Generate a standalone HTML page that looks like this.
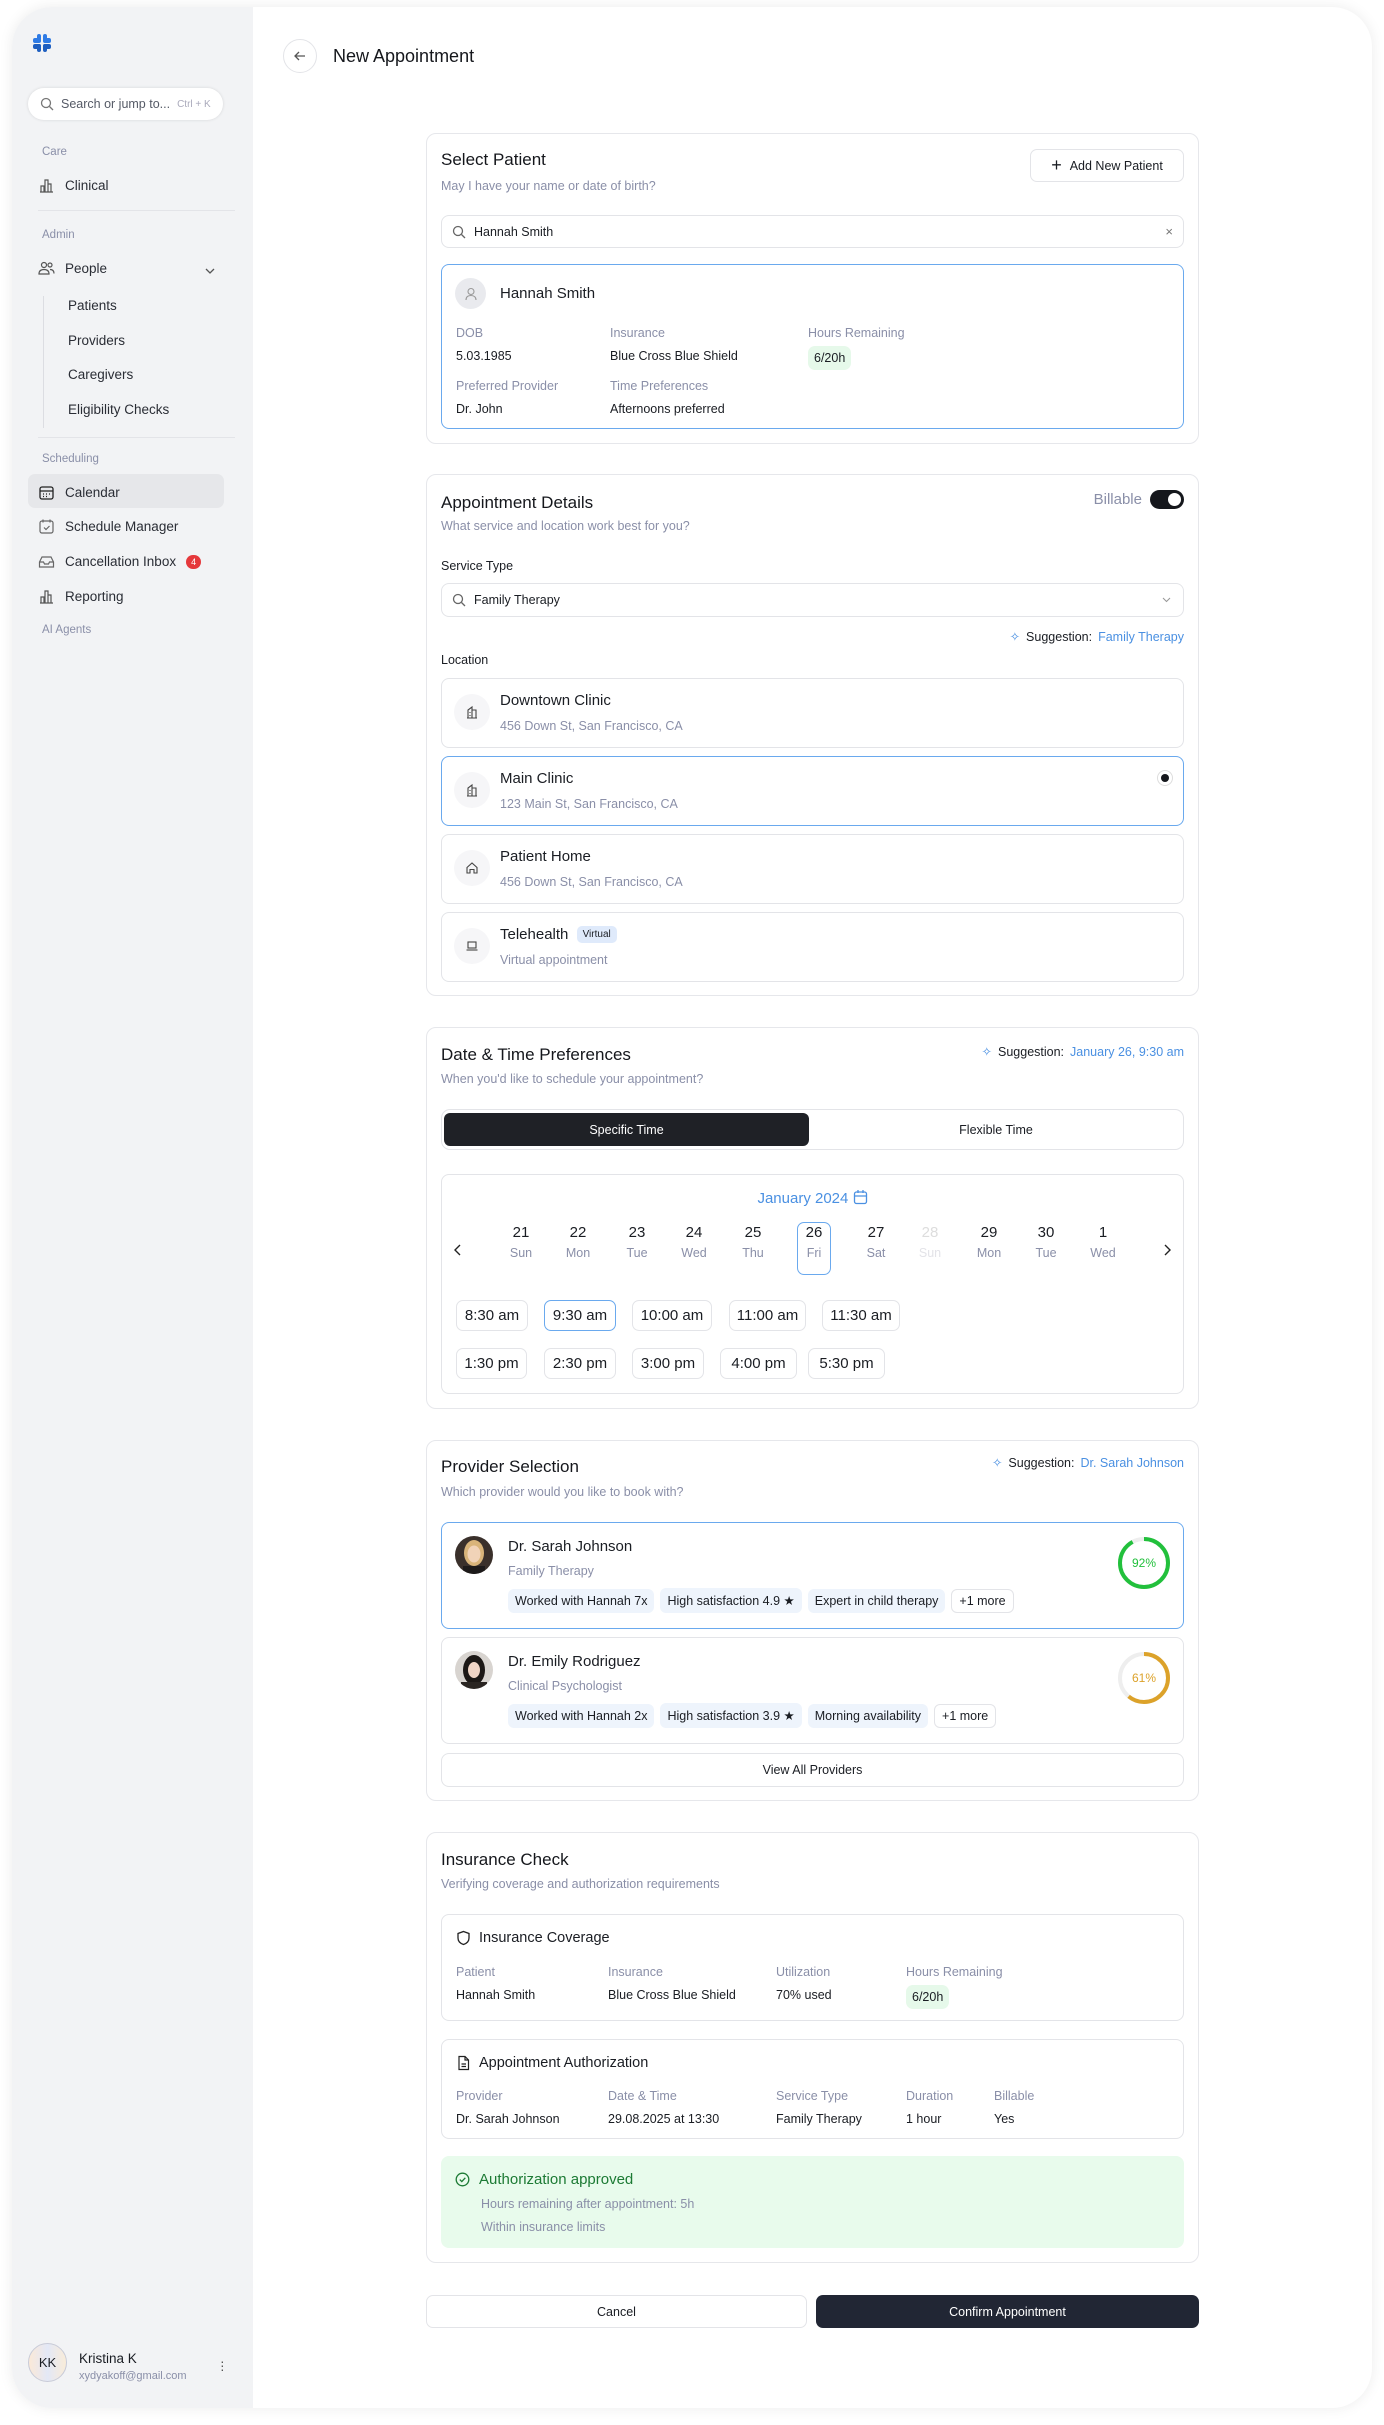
<!DOCTYPE html>
<html><head><meta charset="utf-8"><style>
*{box-sizing:border-box;margin:0;padding:0}
body{width:1384px;height:2425px;background:#fff;font-family:"Liberation Sans",sans-serif;color:#1a1d23;position:relative;overflow:hidden;font-size:13px}
.frame{position:absolute;left:12px;top:7px;width:1360px;height:2401px;border-radius:40px;background:#fff;box-shadow:0 0 14px rgba(0,0,0,.08);overflow:hidden}
.side{position:absolute;left:0;top:0;width:241px;height:100%;background:#f2f3f5}
.a{position:absolute}
.muted{color:#8a8fa8}
.sl{position:absolute;left:30px;font-size:11.5px;color:#8a8fa8}
.si{position:absolute;left:26px;font-size:13.5px;color:#2a2d35;display:flex;align-items:center;gap:10px}
.si svg{width:17px;height:17px}
.sub{position:absolute;left:56px;font-size:13.5px;color:#2a2d35}
.card{position:absolute;left:426px;width:773px;border:1px solid #e6e7eb;border-radius:10px;background:#fff}
.h{position:absolute;left:14px;font-size:17px;color:#15171c}
.st{position:absolute;left:14px;font-size:12.5px;color:#8a8fa8}
.box{position:absolute;left:14px;right:14px;border:1px solid #e3e4e8;border-radius:8px;background:#fff}
.sel{border:1.5px solid #6aa9ee}
.lbl{position:absolute;font-size:12.5px;color:#8a8fa8}
.val{position:absolute;font-size:12.5px;color:#1a1d23}
.pill{position:absolute;background:#e6f9ea;border-radius:7px;padding:5px 6px;font-size:12.5px}
.sug{position:absolute;right:14px;font-size:12.5px;color:#1a1d23;display:flex;gap:6px;align-items:center}
.sug b{font-weight:normal;color:#4a90e2}
.loc .ic{position:absolute;left:12px;top:15px;width:36px;height:36px;border-radius:50%;background:#f6f6f8;display:flex;align-items:center;justify-content:center}
.loc .n{position:absolute;left:58px;top:13px;font-size:15px}
.loc .ad{position:absolute;left:58px;top:40px;font-size:12.5px;color:#8a8fa8}
.dc{position:absolute;width:34px;text-align:center;top:49px}
.dc .d{font-size:15px;color:#1a1d23}
.dc .w{font-size:12.5px;color:#8a8fa8;margin-top:5px}
.t{position:absolute;height:31px;border:1px solid #e3e4e8;border-radius:7px;font-size:15px;display:flex;align-items:center;justify-content:center}
.tag{display:inline-block;background:#eef4fc;border-radius:6px;padding:5px 7px;font-size:12.5px;margin-right:6px}
.tag.o{background:#fff;border:1px solid #e3e4e8;padding:4px 7px}
</style></head><body>
<div class="frame">
<div class="side">
 <svg class="a" style="left:20px;top:26px" width="20" height="20" viewBox="0 0 20 20"><g fill="#2f7be5"><rect x="1" y="5" width="8" height="5" rx="2"/><rect x="11" y="5" width="8" height="5" rx="2"/><rect x="1" y="11" width="8" height="5" rx="2" fill="#1f5fc0"/><rect x="11" y="11" width="8" height="5" rx="2" fill="#1f5fc0"/><rect x="5" y="1" width="4" height="8" rx="2"/><rect x="11" y="1" width="4" height="8" rx="2"/><rect x="5" y="11" width="4" height="8" rx="2" fill="#1f5fc0"/><rect x="11" y="11" width="4" height="8" rx="2" fill="#1f5fc0"/></g></svg>
 <div class="a" style="left:16px;top:81px;width:195px;height:32px;background:#fff;border-radius:16px;box-shadow:0 0 3px rgba(0,0,0,.12);display:flex;align-items:center;padding-left:12px;gap:7px;font-size:12.5px;color:#555a66">
  <svg width="14" height="14" viewBox="0 0 14 14" fill="none" stroke="#777" stroke-width="1.3"><circle cx="6" cy="6" r="4.5"/><path d="M9.5 9.5L13 13"/></svg>Search or jump to... <span style="font-size:10px;color:#aab">Ctrl + K</span></div>
 <div class="sl" style="top:139px">Care</div>
 <div class="si" style="top:170px"><svg viewBox="0 0 17 17" fill="none" stroke="#555" stroke-width="1.2"><path d="M2 15h13M3 15V9h3v6M7 15V3h3v12M10 15V7h3v8"/></svg>Clinical</div>
 <div class="a" style="left:26px;top:203px;width:197px;height:1px;background:#e3e4e8"></div>
 <div class="sl" style="top:222px">Admin</div>
 <div class="si" style="top:253px"><svg viewBox="0 0 17 17" fill="none" stroke="#555" stroke-width="1.2"><circle cx="6" cy="5" r="2.5"/><circle cx="12" cy="5" r="2"/><path d="M1 14c0-3 2-4.5 5-4.5s5 1.5 5 4.5zM12 9.5c2.5 0 4 1.5 4 4"/></svg>People</div>
 <svg class="a" style="left:193px;top:261px" width="10" height="6" viewBox="0 0 10 6" fill="none" stroke="#555" stroke-width="1.3"><path d="M1 1l4 4 4-4"/></svg>
 <div class="a" style="left:31px;top:289px;width:1px;height:132px;background:#dcdde2"></div>
 <div class="sub" style="top:291px">Patients</div>
 <div class="sub" style="top:326px">Providers</div>
 <div class="sub" style="top:360px">Caregivers</div>
 <div class="sub" style="top:395px">Eligibility Checks</div>
 <div class="a" style="left:26px;top:430px;width:197px;height:1px;background:#e3e4e8"></div>
 <div class="sl" style="top:446px">Scheduling</div>
 <div class="a" style="left:16px;top:467px;width:196px;height:34px;background:#e6e7ea;border-radius:7px"></div>
 <div class="si" style="top:477px"><svg viewBox="0 0 17 17" fill="none" stroke="#222" stroke-width="1.3"><rect x="2" y="3" width="13" height="12" rx="2"/><path d="M2 7h13M5 10h1M8 10h1M11 10h1M5 12.5h1M8 12.5h1"/></svg>Calendar</div>
 <div class="si" style="top:511px"><svg viewBox="0 0 17 17" fill="none" stroke="#666" stroke-width="1.2"><rect x="2" y="3" width="13" height="12" rx="2"/><path d="M5 1.5v3M12 1.5v3M6 9.5l2 2 3.5-3.5"/></svg>Schedule Manager</div>
 <div class="si" style="top:546px"><svg viewBox="0 0 17 17" fill="none" stroke="#666" stroke-width="1.2"><path d="M1.5 9l2.5-5h9l2.5 5v5h-14zM1.5 9h4l1 2h4l1-2h4"/></svg>Cancellation Inbox <span style="background:#e5383b;color:#fff;font-size:9px;border-radius:8px;padding:2px 5px">4</span></div>
 <div class="si" style="top:581px"><svg viewBox="0 0 17 17" fill="none" stroke="#555" stroke-width="1.2"><path d="M2 15h13M3 15V9h3v6M7 15V3h3v12M10 15V7h3v8"/></svg>Reporting</div>
 <div class="sl" style="top:617px">AI Agents</div>
 <div class="a" style="left:16px;top:2336px;width:39px;height:39px;border-radius:50%;border:1px solid #c8cbd8;background:linear-gradient(90deg,#fbe9d8,#e3e8f6,#f9ecd9);display:flex;align-items:center;justify-content:center;font-size:13px">KK</div>
 <div class="a" style="left:67px;top:2344px;font-size:13.5px">Kristina K</div>
 <div class="a" style="left:67px;top:2363px;font-size:11px;color:#8a8fa8">xydyakoff@gmail.com</div>
 <div class="a" style="left:208px;top:2352px;width:3px;line-height:4px;font-size:14px;color:#555">·<br>·<br>·</div>
</div>
</div>

<div class="a" style="left:283px;top:39px;width:34px;height:34px;border-radius:50%;border:1px solid #e3e4e8;display:flex;align-items:center;justify-content:center"><svg width="12" height="12" viewBox="0 0 12 12" fill="none" stroke="#555" stroke-width="1.3"><path d="M11 6H1M5 2L1 6l4 4"/></svg></div>
<div class="a" style="left:333px;top:46px;font-size:18px;color:#15171c">New Appointment</div>

<!-- Select Patient -->
<div class="card" style="top:133px;height:311px">
 <div class="h" style="top:16px">Select Patient</div>
 <div class="st" style="top:45px">May I have your name or date of birth?</div>
 <div class="a" style="right:14px;top:15px;width:154px;height:33px;border:1px solid #e3e4e8;border-radius:7px;display:flex;align-items:center;justify-content:center;gap:8px;font-size:12.5px"><span style="font-size:18px;font-weight:300">+</span>Add New Patient</div>
 <div class="box" style="top:81px;height:33px;display:flex;align-items:center;padding-left:10px;gap:8px;font-size:12.5px"><svg width="14" height="14" viewBox="0 0 14 14" fill="none" stroke="#666" stroke-width="1.3"><circle cx="6" cy="6" r="4.5"/><path d="M9.5 9.5L13 13"/></svg>Hannah Smith<span style="position:absolute;right:10px;color:#777;font-size:13px">×</span></div>
 <div class="box sel" style="top:130px;height:165px">
  <div class="a" style="left:13px;top:13px;width:31px;height:31px;border-radius:50%;background:#e9eaee;display:flex;align-items:center;justify-content:center"><svg width="14" height="14" viewBox="0 0 14 14" fill="none" stroke="#999" stroke-width="1.1"><circle cx="7" cy="4.5" r="3"/><path d="M2 13c0-3 2-4.5 5-4.5s5 1.5 5 4.5"/></svg></div>
  <div class="a" style="left:58px;top:20px;font-size:15px">Hannah Smith</div>
  <div class="lbl" style="left:14px;top:61px">DOB</div><div class="val" style="left:14px;top:84px">5.03.1985</div>
  <div class="lbl" style="left:168px;top:61px">Insurance</div><div class="val" style="left:168px;top:84px">Blue Cross Blue Shield</div>
  <div class="lbl" style="left:366px;top:61px">Hours Remaining</div><div class="pill" style="left:366px;top:81px">6/20h</div>
  <div class="lbl" style="left:14px;top:114px">Preferred Provider</div><div class="val" style="left:14px;top:137px">Dr. John</div>
  <div class="lbl" style="left:168px;top:114px">Time Preferences</div><div class="val" style="left:168px;top:137px">Afternoons preferred</div>
 </div>
</div>

<!-- Appointment details -->
<div class="card" style="top:474px;height:522px">
 <div class="h" style="top:18px">Appointment Details</div>
 <div class="st" style="top:44px">What service and location work best for you?</div>
 <div class="a" style="right:14px;top:15px;display:flex;align-items:center;gap:8px;font-size:15px;color:#8a8fa8">Billable<span style="width:34px;height:19px;border-radius:10px;background:#15171c;position:relative"><span style="position:absolute;right:3px;top:3px;width:13px;height:13px;border-radius:50%;background:#fff"></span></span></div>
 <div class="a" style="left:14px;top:84px;font-size:12.5px">Service Type</div>
 <div class="box" style="top:108px;height:34px;display:flex;align-items:center;padding-left:10px;gap:8px;font-size:12.5px"><svg width="14" height="14" viewBox="0 0 14 14" fill="none" stroke="#666" stroke-width="1.3"><circle cx="6" cy="6" r="4.5"/><path d="M9.5 9.5L13 13"/></svg>Family Therapy<svg style="position:absolute;right:12px" width="9" height="6" viewBox="0 0 9 6" fill="none" stroke="#999" stroke-width="1.1"><path d="M1 1l3.5 3.5L8 1"/></svg></div>
 <div class="sug" style="top:154px"><span style="color:#4a90e2">✧</span>Suggestion: <b>Family Therapy</b></div>
 <div class="a" style="left:14px;top:178px;font-size:12.5px">Location</div>
 <div class="box loc" style="top:203px;height:70px"><div class="ic"><svg width="14" height="14" viewBox="0 0 14 14" fill="none" stroke="#444" stroke-width="1.1"><path d="M2 13h10M3 13V5l4-3v11M7 5h4v8M5 7v1M5 10v1"/></svg></div><div class="n">Downtown Clinic</div><div class="ad">456 Down St, San Francisco, CA</div></div>
 <div class="box loc sel" style="top:281px;height:70px"><div class="ic"><svg width="14" height="14" viewBox="0 0 14 14" fill="none" stroke="#444" stroke-width="1.1"><path d="M2 13h10M3 13V5l4-3v11M7 5h4v8M5 7v1M5 10v1"/></svg></div><div class="n">Main Clinic</div><div class="ad">123 Main St, San Francisco, CA</div><div class="a" style="right:10px;top:13px;width:16px;height:16px;border-radius:50%;border:1px solid #ddd;display:flex;align-items:center;justify-content:center"><span style="width:8px;height:8px;border-radius:50%;background:#15171c"></span></div></div>
 <div class="box loc" style="top:359px;height:70px"><div class="ic"><svg width="14" height="14" viewBox="0 0 14 14" fill="none" stroke="#444" stroke-width="1.1"><path d="M2 6.5L7 2l5 4.5V12H9V8.5H5V12H2z"/></svg></div><div class="n">Patient Home</div><div class="ad">456 Down St, San Francisco, CA</div></div>
 <div class="box loc" style="top:437px;height:70px"><div class="ic"><svg width="14" height="14" viewBox="0 0 14 14" fill="none" stroke="#444" stroke-width="1.1"><rect x="3" y="3" width="8" height="6"/><path d="M1.5 11h11"/></svg></div><div class="n">Telehealth <span style="font-size:10px;background:#dfeafb;border-radius:5px;padding:3px 6px;margin-left:4px;vertical-align:2px">Virtual</span></div><div class="ad">Virtual appointment</div></div>
</div>

<!-- Date & time -->
<div class="card" style="top:1027px;height:382px">
 <div class="h" style="top:17px">Date &amp; Time Preferences</div>
 <div class="st" style="top:44px">When you'd like to schedule your appointment?</div>
 <div class="sug" style="top:16px"><span style="color:#4a90e2">✧</span>Suggestion: <b>January 26, 9:30 am</b></div>
 <div class="box" style="top:81px;height:41px;border-radius:9px">
  <div class="a" style="left:2px;top:3px;width:365px;height:33px;background:#1f2126;border-radius:6px;color:#fff;font-size:12.5px;display:flex;align-items:center;justify-content:center">Specific Time</div>
  <div class="a" style="left:367px;right:0;top:3px;height:33px;font-size:12.5px;display:flex;align-items:center;justify-content:center">Flexible Time</div>
 </div>
 <div class="box" style="top:146px;height:220px">
  <div class="a" style="left:0;right:0;top:14px;text-align:center;font-size:15px;color:#4a90e2">January 2024 <svg width="15" height="16" viewBox="0 0 15 16" fill="none" stroke="#4a90e2" stroke-width="1.3" style="vertical-align:-2px"><rect x="1.5" y="3" width="12" height="11.5" rx="2"/><path d="M1.5 7h12M5 1v3M10 1v3"/></svg></div>
  <svg class="a" style="left:12px;top:69px" width="8" height="12" viewBox="0 0 8 12" fill="none" stroke="#222" stroke-width="1.4"><path d="M6 1L1 6l5 5"/></svg>
  <svg class="a" style="right:12px;top:69px" width="8" height="12" viewBox="0 0 8 12" fill="none" stroke="#222" stroke-width="1.4"><path d="M2 1l5 5-5 5"/></svg>
  <div class="dc" style="left:62px"><div class="d">21</div><div class="w">Sun</div></div>
  <div class="dc" style="left:119px"><div class="d">22</div><div class="w">Mon</div></div>
  <div class="dc" style="left:178px"><div class="d">23</div><div class="w">Tue</div></div>
  <div class="dc" style="left:235px"><div class="d">24</div><div class="w">Wed</div></div>
  <div class="dc" style="left:294px"><div class="d">25</div><div class="w">Thu</div></div>
  <div class="a" style="left:355px;top:47px;width:34px;height:53px;border:1.5px solid #6aa9ee;border-radius:7px"></div>
  <div class="dc" style="left:355px"><div class="d">26</div><div class="w">Fri</div></div>
  <div class="dc" style="left:417px"><div class="d">27</div><div class="w">Sat</div></div>
  <div class="dc" style="left:471px"><div class="d" style="color:#ddd">28</div><div class="w" style="color:#e3e3e8">Sun</div></div>
  <div class="dc" style="left:530px"><div class="d">29</div><div class="w">Mon</div></div>
  <div class="dc" style="left:587px"><div class="d">30</div><div class="w">Tue</div></div>
  <div class="dc" style="left:644px"><div class="d">1</div><div class="w">Wed</div></div>
  <div class="t" style="left:14px;top:125px;width:72px">8:30 am</div>
  <div class="t" style="left:102px;top:125px;width:72px;border:1.5px solid #6aa9ee">9:30 am</div>
  <div class="t" style="left:190px;top:125px;width:80px">10:00 am</div>
  <div class="t" style="left:287px;top:125px;width:77px">11:00 am</div>
  <div class="t" style="left:380px;top:125px;width:78px">11:30 am</div>
  <div class="t" style="left:14px;top:173px;width:71px">1:30 pm</div>
  <div class="t" style="left:102px;top:173px;width:72px">2:30 pm</div>
  <div class="t" style="left:190px;top:173px;width:72px">3:00 pm</div>
  <div class="t" style="left:278px;top:173px;width:77px">4:00 pm</div>
  <div class="t" style="left:366px;top:173px;width:77px">5:30 pm</div>
 </div>
</div>

<!-- Provider -->
<div class="card" style="top:1440px;height:361px">
 <div class="h" style="top:16px">Provider Selection</div>
 <div class="st" style="top:44px">Which provider would you like to book with?</div>
 <div class="sug" style="top:14px"><span style="color:#4a90e2">✧</span>Suggestion: <b>Dr. Sarah Johnson</b></div>
 <div class="box sel" style="top:81px;height:107px">
  <svg class="a" style="left:13px;top:13px" width="38" height="38" viewBox="0 0 38 38"><clipPath id="c1"><circle cx="19" cy="19" r="19"/></clipPath><g clip-path="url(#c1)"><rect width="38" height="38" fill="#3a302b"/><ellipse cx="19" cy="17" rx="10" ry="13" fill="#d9b47a"/><ellipse cx="19" cy="18" rx="6.5" ry="8.5" fill="#f1d3b8"/><rect x="8" y="30" width="22" height="10" fill="#1d1a1a"/></g></svg>
  <div class="a" style="left:66px;top:15px;font-size:15px">Dr. Sarah Johnson</div>
  <div class="a" style="left:66px;top:41px;font-size:12.5px;color:#8a8fa8">Family Therapy</div>
  <div class="a" style="left:66px;top:65px;white-space:nowrap"><span class="tag">Worked with Hannah 7x</span><span class="tag">High satisfaction 4.9 ★</span><span class="tag">Expert in child therapy</span><span class="tag o">+1 more</span></div>
  <svg class="a" style="right:12px;top:13px" width="54" height="54" viewBox="0 0 54 54"><circle cx="27" cy="27" r="24" fill="none" stroke="#eee" stroke-width="4"/><circle cx="27" cy="27" r="24" fill="none" stroke="#22c03c" stroke-width="4" stroke-dasharray="138.7 150.8" transform="rotate(-90 27 27)"/><text x="27" y="31" text-anchor="middle" font-size="12" fill="#22c03c" font-family="Liberation Sans">92%</text></svg>
 </div>
 <div class="box" style="top:196px;height:107px">
  <svg class="a" style="left:13px;top:13px" width="38" height="38" viewBox="0 0 38 38"><clipPath id="c2"><circle cx="19" cy="19" r="19"/></clipPath><g clip-path="url(#c2)"><rect width="38" height="38" fill="#d8d4d0"/><ellipse cx="19" cy="19" rx="11" ry="15" fill="#1c1816"/><ellipse cx="19" cy="19" rx="6" ry="8" fill="#f0d5c6"/><rect x="6" y="31" width="26" height="8" fill="#2a2522"/></g></svg>
  <div class="a" style="left:66px;top:15px;font-size:15px">Dr. Emily Rodriguez</div>
  <div class="a" style="left:66px;top:41px;font-size:12.5px;color:#8a8fa8">Clinical Psychologist</div>
  <div class="a" style="left:66px;top:65px;white-space:nowrap"><span class="tag">Worked with Hannah 2x</span><span class="tag">High satisfaction 3.9 ★</span><span class="tag">Morning availability</span><span class="tag o">+1 more</span></div>
  <svg class="a" style="right:12px;top:13px" width="54" height="54" viewBox="0 0 54 54"><circle cx="27" cy="27" r="24" fill="none" stroke="#eee" stroke-width="4"/><circle cx="27" cy="27" r="24" fill="none" stroke="#dca22a" stroke-width="4" stroke-dasharray="92 150.8" transform="rotate(-90 27 27)"/><text x="27" y="31" text-anchor="middle" font-size="12" fill="#dca22a" font-family="Liberation Sans">61%</text></svg>
 </div>
 <div class="box" style="top:312px;height:34px;display:flex;align-items:center;justify-content:center;font-size:12.5px">View All Providers</div>
</div>

<!-- Insurance -->
<div class="card" style="top:1832px;height:431px">
 <div class="h" style="top:17px">Insurance Check</div>
 <div class="st" style="top:44px">Verifying coverage and authorization requirements</div>
 <div class="box" style="top:81px;height:107px">
  <div class="a" style="left:14px;top:15px;font-size:14.5px;display:flex;gap:8px;align-items:center"><svg width="15" height="16" viewBox="0 0 15 16" fill="none" stroke="#222" stroke-width="1.3"><path d="M7.5 1.5l5.5 2v4.5c0 3.5-2.5 5.5-5.5 6.5-3-1-5.5-3-5.5-6.5V3.5z"/></svg>Insurance Coverage</div>
  <div class="lbl" style="left:14px;top:50px">Patient</div><div class="val" style="left:14px;top:73px">Hannah Smith</div>
  <div class="lbl" style="left:166px;top:50px">Insurance</div><div class="val" style="left:166px;top:73px">Blue Cross Blue Shield</div>
  <div class="lbl" style="left:334px;top:50px">Utilization</div><div class="val" style="left:334px;top:73px">70% used</div>
  <div class="lbl" style="left:464px;top:50px">Hours Remaining</div><div class="pill" style="left:464px;top:70px">6/20h</div>
 </div>
 <div class="box" style="top:206px;height:100px">
  <div class="a" style="left:14px;top:15px;font-size:14.5px;display:flex;gap:8px;align-items:center"><svg width="15" height="16" viewBox="0 0 15 16" fill="none" stroke="#222" stroke-width="1.2"><path d="M3 1.5h6l3.5 3.5v9.5H3zM9 1.5V5h3.5M5.5 9h4.5M5.5 11.5h4.5"/></svg>Appointment Authorization</div>
  <div class="lbl" style="left:14px;top:49px">Provider</div><div class="val" style="left:14px;top:72px">Dr. Sarah Johnson</div>
  <div class="lbl" style="left:166px;top:49px">Date &amp; Time</div><div class="val" style="left:166px;top:72px">29.08.2025 at 13:30</div>
  <div class="lbl" style="left:334px;top:49px">Service Type</div><div class="val" style="left:334px;top:72px">Family Therapy</div>
  <div class="lbl" style="left:464px;top:49px">Duration</div><div class="val" style="left:464px;top:72px">1 hour</div>
  <div class="lbl" style="left:552px;top:49px">Billable</div><div class="val" style="left:552px;top:72px">Yes</div>
 </div>
 <div class="a" style="left:14px;right:14px;top:323px;height:92px;background:#e8fbec;border-radius:8px">
  <div class="a" style="left:14px;top:15px;font-size:15px;color:#1c7a34;display:flex;gap:9px;align-items:center"><svg width="15" height="15" viewBox="0 0 15 15" fill="none" stroke="#1c7a34" stroke-width="1.3"><circle cx="7.5" cy="7.5" r="6.3"/><path d="M4.8 7.6l2 2 3.5-3.8"/></svg>Authorization approved</div>
  <div class="a" style="left:40px;top:41px;font-size:12.5px;color:#8a8fa8">Hours remaining after appointment: 5h</div>
  <div class="a" style="left:40px;top:64px;font-size:12.5px;color:#8a8fa8">Within insurance limits</div>
 </div>
</div>

<div class="a" style="left:426px;top:2295px;width:381px;height:33px;border:1px solid #e3e4e8;border-radius:7px;display:flex;align-items:center;justify-content:center;font-size:12.5px">Cancel</div>
<div class="a" style="left:816px;top:2295px;width:383px;height:33px;background:#212634;border-radius:7px;color:#fff;display:flex;align-items:center;justify-content:center;font-size:12.5px">Confirm Appointment</div>
</body></html>
